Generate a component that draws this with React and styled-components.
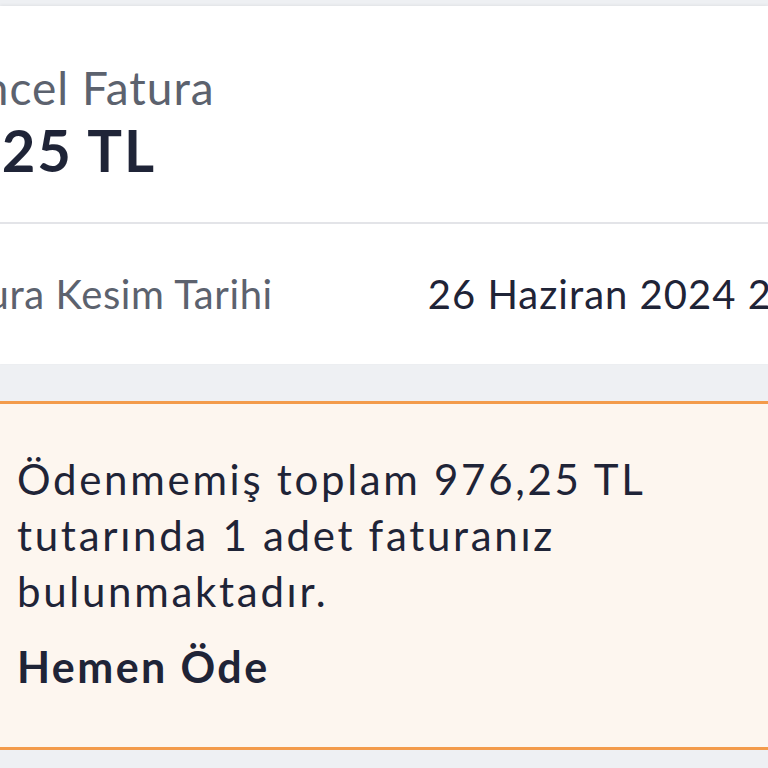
import React from 'react';
import styled, { createGlobalStyle } from 'styled-components';

const GlobalStyle = createGlobalStyle`
    html, body {
        margin: 0;
        padding: 0;
        background: #eef0f3;
        overflow: hidden;
    }
    body {
        font-family: Lato, "Noto Sans", sans-serif;
        color: #1f2437;
    }
`;

const Page = styled.div`
    width: 768px;
    height: 768px;
    padding-top: 6px;
    box-sizing: border-box;
    overflow: hidden;
`;

//BILL CARD
const Card = styled.div`
    background: #FFFFFF;
    box-shadow: 0 -1px 3px rgba(0, 0, 0, 0.06);
`;

const Summary = styled.div`
    height: 218px;
    box-sizing: border-box;
    padding-top: 54px;
    border-bottom: 2px solid #e3e4e8;
    white-space: nowrap;
`;

const Shifted = styled.div`
    margin-left: ${p => p.$shift}px;
`;

const SummaryLabel = styled.p`
    margin: 0;
    font-size: 46px;
    line-height: 1.2;
    letter-spacing: 1px;
    font-weight: 400;
    color: #5c626e;
`;

const SummaryAmount = styled.p`
    margin: 0;
    font-size: 58px;
    line-height: 1.2;
    letter-spacing: 2px;
    font-weight: 700;
    color: #1f2437;
`;

const InfoRow = styled.div`
    height: 140px;
    display: flex;
    align-items: center;
    gap: 155px;
    white-space: nowrap;
    font-size: 40px;
    line-height: 48px;
`;

const InfoLabel = styled.span`
    color: #5c626e;
    letter-spacing: 0.6px;
`;

const InfoValue = styled.span`
    color: #1f2437;
    letter-spacing: 1px;
`;

//UNPAID WARNING
const Alert = styled.div`
    margin-top: 37px;
    background: #fdf6ef;
    border-top: 3px solid #f39b4b;
    border-bottom: 3px solid #f39b4b;
    padding: 47px 17px 55px;
`;

const AlertText = styled.p`
    margin: 0;
    font-size: 42px;
    line-height: 56px;
    letter-spacing: 2.7px;
    color: #1f2437;
`;

const PayNow = styled.a`
    display: block;
    margin-top: 23px;
    font-size: 43px;
    line-height: 50px;
    letter-spacing: 2.4px;
    font-weight: 700;
    color: #1f2437;
    text-decoration: none;
    cursor: pointer;
`;

const BillOverview = ({
    title = "Güncel Fatura",
    amount = "925 TL",
    dateLabel = "Fatura Kesim Tarihi",
    date = "26 Haziran 2024 23:59",
    unpaidTotal = "976,25 TL",
    unpaidCount = 1,
    onClickPay = () => {},
}) => {
    return <Page>
        <Card>
            <Summary>
                <Shifted $shift={-78}>
                    <SummaryLabel>{title}</SummaryLabel>
                </Shifted>
                <Shifted $shift={-34}>
                    <SummaryAmount>{amount}</SummaryAmount>
                </Shifted>
            </Summary>
            <InfoRow>
                <Shifted $shift={-69}>
                    <InfoLabel>{dateLabel}</InfoLabel>
                </Shifted>
                <InfoValue>{date}</InfoValue>
            </InfoRow>
        </Card>

        <Alert>
            <AlertText>
                Ödenmemiş toplam {unpaidTotal} tutarında {unpaidCount} adet faturanız bulunmaktadır.
            </AlertText>
            <PayNow onClick={onClickPay}>Hemen Öde</PayNow>
        </Alert>
    </Page>
}

export default function App() {
    return <>
        <GlobalStyle />
        <BillOverview />
    </>
}
